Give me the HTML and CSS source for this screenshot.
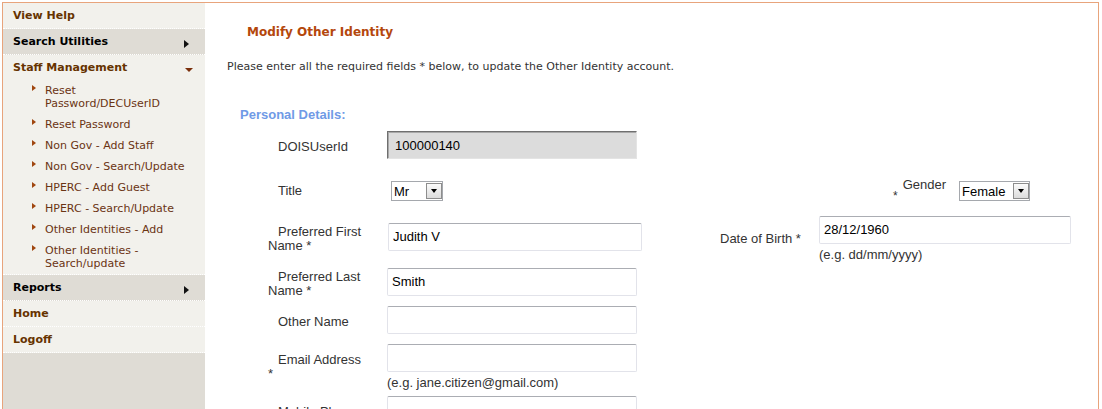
FILE: index.html
```html
<!DOCTYPE html>
<html lang="en">
<head>
    <meta charset="UTF-8">
    <meta name="viewport" content="width=device-width, initial-scale=1.0">
    <title>Modify Other Identity</title>
    <link rel="stylesheet" href="styles.css">
</head>
<body>
    <div class="page">
        <nav class="sidebar">
            <ul class="menu">
                <li class="menu-item"><a class="menu-link" href="#">View Help</a></li>
                <li class="menu-item closed"><a class="menu-link" href="#">Search Utilities<span class="arrow-right"></span></a></li>
                <li class="menu-item open">
                    <a class="menu-link" href="#">Staff Management<span class="arrow-down"></span></a>
                    <ul class="submenu">
                        <li><a href="#">Reset Password/DECUserID</a></li>
                        <li><a href="#">Reset Password</a></li>
                        <li><a href="#">Non Gov - Add Staff</a></li>
                        <li><a href="#">Non Gov - Search/Update</a></li>
                        <li><a href="#">HPERC - Add Guest</a></li>
                        <li><a href="#">HPERC - Search/Update</a></li>
                        <li><a href="#">Other Identities - Add</a></li>
                        <li><a href="#">Other Identities - Search/update</a></li>
                    </ul>
                </li>
                <li class="menu-item closed"><a class="menu-link" href="#">Reports<span class="arrow-right"></span></a></li>
                <li class="menu-item"><a class="menu-link" href="#">Home</a></li>
                <li class="menu-item"><a class="menu-link" href="#">Logoff</a></li>
            </ul>
        </nav>

        <main class="content">
            <h2 class="page-title">Modify Other Identity</h2>
            <p class="intro">Please enter all the required fields * below, to update the Other Identity account.</p>
            <h3 class="section-title">Personal Details:</h3>

            <table class="form-table">
                <colgroup>
                    <col class="col-label">
                    <col class="col-field">
                    <col class="col-label2">
                    <col class="col-field2">
                </colgroup>
                <tr>
                    <td class="label">DOISUserId</td>
                    <td><input class="text-input readonly" type="text" value="100000140" readonly></td>
                    <td></td>
                    <td></td>
                </tr>
                <tr class="row-select">
                    <td class="label">Title</td>
                    <td>
                        <span class="select-wrap title-select">
                            <select><option>Mr</option><option>Mrs</option><option>Ms</option></select>
                            <span class="select-btn"></span>
                        </span>
                    </td>
                    <td colspan="2" class="gender-cell">
                        <div class="gender-field">
                            <span class="req">*</span>
                            <span class="gender-label">Gender</span>
                            <span class="select-wrap gender-select">
                                <select><option>Female</option><option>Male</option></select>
                                <span class="select-btn"></span>
                            </span>
                        </div>
                    </td>
                </tr>
                <tr>
                    <td class="label">Preferred First Name *</td>
                    <td><input class="text-input wide" type="text" value="Judith V"></td>
                    <td class="label2">Date of Birth *</td>
                    <td>
                        <input class="text-input dob" type="text" value="28/12/1960">
                        <div class="hint">(e.g. dd/mm/yyyy)</div>
                    </td>
                </tr>
                <tr>
                    <td class="label">Preferred Last Name *</td>
                    <td><input class="text-input" type="text" value="Smith"></td>
                    <td></td>
                    <td></td>
                </tr>
                <tr>
                    <td class="label">Other Name</td>
                    <td><input class="text-input" type="text" value=""></td>
                    <td></td>
                    <td></td>
                </tr>
                <tr>
                    <td class="label">Email Address *</td>
                    <td>
                        <input class="text-input" type="text" value="">
                        <div class="hint">(e.g. jane.citizen@gmail.com)</div>
                    </td>
                    <td></td>
                    <td></td>
                </tr>
                <tr>
                    <td class="label">Mobile Phone</td>
                    <td><input class="text-input" type="text" value=""></td>
                    <td></td>
                    <td></td>
                </tr>
            </table>
        </main>
    </div>
</body>
</html>
```

FILE: styles.css
```css
body {
    margin: 0;
    padding: 0;
    background-color: #fff;
    font-family: "DejaVu Sans", Verdana, sans-serif;
}
.page {
    display: flex;
    margin: 2px 3px 0 2px;
    border: 1px solid #e8a47c;
    border-bottom: none;
    min-height: 420px;
}

/* left menu */
.sidebar {
    width: 202px;
    flex-shrink: 0;
    background-color: #dfdcd5;
}
.menu,
.submenu {
    list-style: none;
    margin: 0;
    padding: 0;
}
.menu-item {
    background-color: #f2f1ec;
    border-bottom: 1px dotted #fff;
}
.menu-item.closed {
    background-color: #dfdcd5;
}
.menu-link {
    position: relative;
    display: block;
    padding: 0 10px;
    height: 25px;
    line-height: 25px;
    font-size: 11px;
    font-weight: bold;
    color: #663300;
    text-decoration: none;
}
.closed .menu-link {
    color: #000;
}
.arrow-right {
    position: absolute;
    right: 16px;
    top: 11px;
    width: 0;
    height: 0;
    border-top: 4px solid transparent;
    border-bottom: 4px solid transparent;
    border-left: 5px solid #111;
}
.arrow-down {
    position: absolute;
    right: 12px;
    top: 13px;
    width: 0;
    height: 0;
    border-left: 4px solid transparent;
    border-right: 4px solid transparent;
    border-top: 4px solid #7a2f0b;
}
.submenu li {
    position: relative;
    padding: 4px 15px 4px 42px;
    line-height: 13px;
    font-size: 11px;
}
.submenu li::before {
    content: "";
    position: absolute;
    left: 29px;
    top: 5px;
    border-top: 3px solid transparent;
    border-bottom: 3px solid transparent;
    border-left: 4px solid #a0460f;
}
.submenu a {
    color: #6b3413;
    text-decoration: none;
}

/* main area */
.content {
    flex-grow: 1;
    padding: 0 22px;
    color: #333;
}
.page-title {
    margin: 21px 0 0 20px;
    font-size: 12px;
    line-height: 16px;
    color: #b4470c;
}
.intro {
    margin: 20px 0 0 0;
    font-size: 11px;
    line-height: 14px;
    color: #333;
}
.section-title {
    margin: 33px 0 0 13px;
    font-family: "Liberation Sans", Arial, sans-serif;
    font-size: 13px;
    line-height: 16px;
    color: #6f9ae6;
}

/* form */
.form-table {
    margin: 5px 0 0 41px;
    border-spacing: 0;
    table-layout: fixed;
    width: 807px;
    font-family: "Liberation Sans", Arial, sans-serif;
    font-size: 13px;
    color: #333;
}
.col-label { width: 119px; }
.col-field { width: 313px; }
.col-label2 { width: 119px; }
.col-field2 { width: 256px; }
.form-table td {
    padding: 3px 0;
    vertical-align: middle;
}
.form-table td.label {
    padding-right: 22px;
    text-indent: 10px;
    line-height: 14px;
}
.form-table td.label2 {
    padding-left: 20px;
    line-height: 14px;
}
.text-input {
    display: block;
    box-sizing: border-box;
    width: 250px;
    height: 28px;
    margin: 0 0 4px 0;
    padding: 0 4px;
    border: 1px solid #e2e3ea;
    border-top-color: #abadb3;
    border-radius: 2px;
    font-family: "Liberation Sans", Arial, sans-serif;
    font-size: 13px;
    color: #000;
    background-color: #fff;
    outline: none;
}
.text-input.wide {
    width: 254px;
    margin-left: 1px;
}
.text-input.dob {
    width: 252px;
}
.text-input.readonly {
    padding-left: 7px;
    border-radius: 0;
    border-color: #6f6f6f #e4e4e4 #e4e4e4 #6f6f6f;
    border-width: 1px;
    box-shadow: inset 1px 1px 0 #a8a8a8;
    background-color: #dcdcdc;
}
.hint {
    line-height: 14px;
    color: #333;
}

/* selects */
.form-table .row-select td {
    padding: 15px 0 11px 0;
    vertical-align: top;
    line-height: 20px;
}
.select-wrap {
    position: relative;
    display: inline-block;
    vertical-align: top;
}
.select-wrap select {
    appearance: none;
    -webkit-appearance: none;
    box-sizing: border-box;
    height: 20px;
    margin: 0;
    padding: 0 18px 0 2px;
    border: 1px solid #a5a8ad;
    border-radius: 0;
    font-family: "Liberation Sans", Arial, sans-serif;
    font-size: 13px;
    color: #000;
    background-color: #fff;
    outline: none;
}
.select-btn {
    position: absolute;
    right: 1px;
    top: 2px;
    box-sizing: border-box;
    width: 16px;
    height: 16px;
    border: 1px solid #8d8d8d;
    background: linear-gradient(#fbfbfb, #dcdcdc);
    pointer-events: none;
}
.select-btn::after {
    content: "";
    position: absolute;
    left: 4px;
    top: 5px;
    border-left: 3.5px solid transparent;
    border-right: 3.5px solid transparent;
    border-top: 4px solid #000;
}
.title-select {
    margin-left: 4px;
}
.title-select select {
    width: 52px;
}
.gender-select select {
    width: 71px;
}
.form-table td.gender-cell {
    padding-left: 193px;
}
.gender-field {
    display: flex;
    align-items: flex-start;
    height: 20px;
}
.req {
    margin: 9px 5px 0 0;
    font-size: 12px;
    line-height: 12px;
}
.gender-label {
    margin-top: -3px;
    line-height: 14px;
}
.gender-select {
    margin-left: 13px;
}
```
